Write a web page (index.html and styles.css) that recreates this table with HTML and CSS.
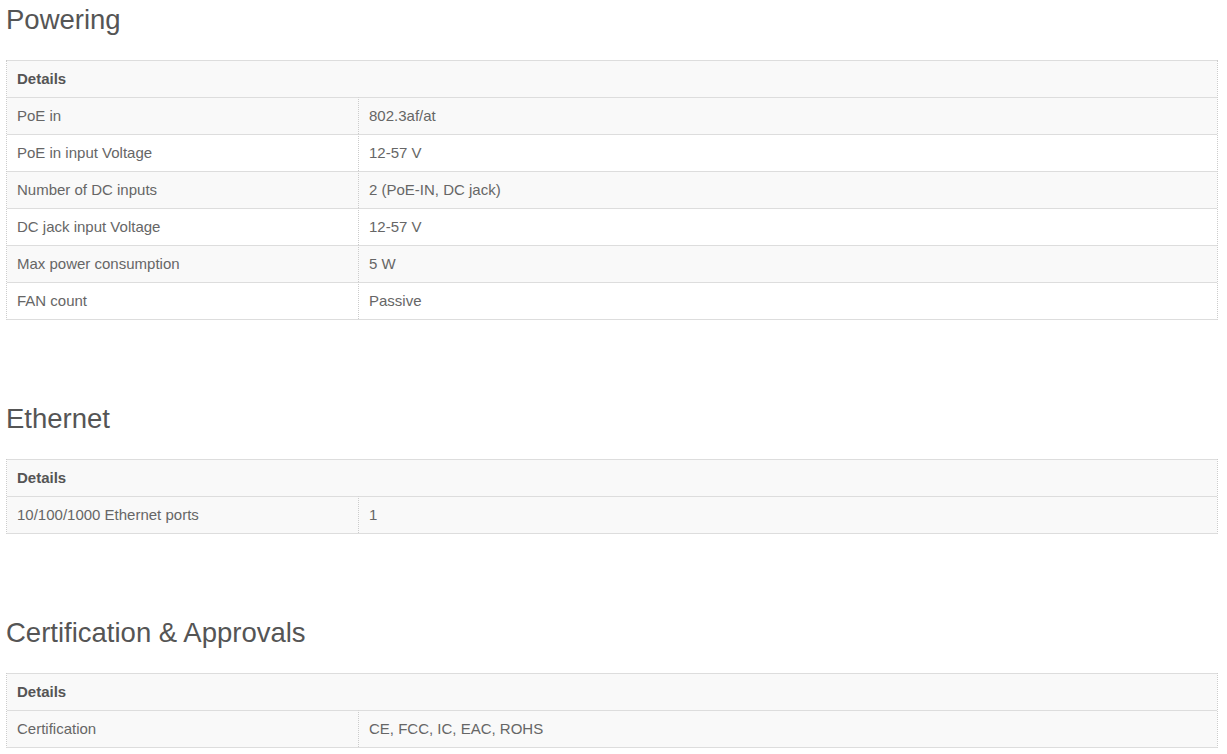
FILE: index.html
```html
<!DOCTYPE html>
<html lang="en">
<head>
<meta charset="utf-8">
<title>Specifications</title>
<link rel="stylesheet" href="styles.css">
</head>
<body>
<div class="page">
  <section class="spec">
    <h2 class="spec-title">Powering</h2>
    <table class="spec-table">
      <colgroup><col class="col-name"><col></colgroup>
      <thead><tr><th colspan="2">Details</th></tr></thead>
      <tbody>
        <tr><td>PoE in</td><td>802.3af/at</td></tr>
        <tr><td>PoE in input Voltage</td><td>12-57 V</td></tr>
        <tr><td>Number of DC inputs</td><td>2 (PoE-IN, DC jack)</td></tr>
        <tr><td>DC jack input Voltage</td><td>12-57 V</td></tr>
        <tr><td>Max power consumption</td><td>5 W</td></tr>
        <tr><td>FAN count</td><td>Passive</td></tr>
      </tbody>
    </table>
  </section>
  <section class="spec">
    <h2 class="spec-title">Ethernet</h2>
    <table class="spec-table">
      <colgroup><col class="col-name"><col></colgroup>
      <thead><tr><th colspan="2">Details</th></tr></thead>
      <tbody>
        <tr><td>10/100/1000 Ethernet ports</td><td>1</td></tr>
      </tbody>
    </table>
  </section>
  <section class="spec">
    <h2 class="spec-title">Certification &amp; Approvals</h2>
    <table class="spec-table">
      <colgroup><col class="col-name"><col></colgroup>
      <thead><tr><th colspan="2">Details</th></tr></thead>
      <tbody>
        <tr><td>Certification</td><td>CE, FCC, IC, EAC, ROHS</td></tr>
      </tbody>
    </table>
  </section>
</div>
</body>
</html>
```

FILE: styles.css
```css
html, body {
  margin: 0;
  padding: 0;
  background: #ffffff;
}

body {
  font-family: "Liberation Sans", Arial, Helvetica, sans-serif;
  color: #666666;
}

.page {
  padding: 5px 9px 0 6px;
}

.spec + .spec {
  margin-top: 84px;
}

.spec-title {
  margin: 0 0 25px 0;
  font-size: 27.5px;
  line-height: 30px;
  font-weight: normal;
  color: #555555;
}

.spec-table {
  width: 1212px;
  table-layout: fixed;
  border-collapse: separate;
  border-spacing: 0;
  border-left: 1px dotted #cccccc;
  border-right: 1px dotted #cccccc;
  border-bottom: 1px solid #dddddd;
  font-size: 15px;
  line-height: 20px;
}

.col-name {
  width: 351px;
}

.spec-table th,
.spec-table td {
  padding: 8px 10px;
  border-top: 1px solid #dddddd;
  text-align: left;
  vertical-align: top;
}

.spec-table th {
  font-weight: bold;
  color: #555555;
  background: #f9f9f9;
}

.spec-table td + td {
  border-left: 1px dotted #cccccc;
}

.spec-table tbody tr:nth-child(odd) td {
  background: #f9f9f9;
}

.spec-table tbody tr:nth-child(even) td {
  background: #ffffff;
}
```
